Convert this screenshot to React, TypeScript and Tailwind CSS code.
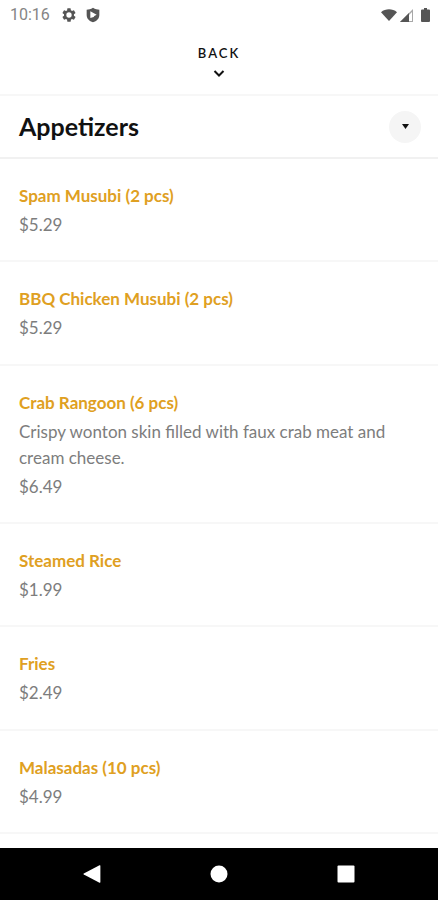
type MenuItem = { name: string; description?: string; price: string };

const items: MenuItem[] = [
  { name: "Spam Musubi (2 pcs)", price: "$5.29" },
  { name: "BBQ Chicken Musubi (2 pcs)", price: "$5.29" },
  {
    name: "Crab Rangoon (6 pcs)",
    description: "Crispy wonton skin filled with faux crab meat and cream cheese.",
    price: "$6.49",
  },
  { name: "Steamed Rice", price: "$1.99" },
  { name: "Fries", price: "$2.49" },
  { name: "Malasadas (10 pcs)", price: "$4.99" },
];

function StatusBar() {
  return (
    <div className="flex h-[30px] items-center justify-between pr-2 pl-[10px] text-[#555555]">
      <div className="flex items-center">
        <time className="w-[51px] font-['Roboto',sans-serif] text-base leading-5 text-[#858585]">10:16</time>
        <svg className="size-4" viewBox="0 0 24 24" fill="currentColor" aria-label="Settings" role="img">
          <path
            fillRule="evenodd"
            d="M19.4 13c.04-.3.06-.6.06-1s-.02-.7-.07-1l2.1-1.65a.5.5 0 0 0 .12-.64l-2-3.46a.5.5 0 0 0-.6-.22l-2.5 1a7.3 7.3 0 0 0-1.7-.98l-.37-2.65A.5.5 0 0 0 14 2h-4a.5.5 0 0 0-.5.42l-.37 2.65c-.6.24-1.17.57-1.69.98l-2.49-1a.5.5 0 0 0-.61.22l-2 3.46a.5.5 0 0 0 .12.64L4.57 11a8 8 0 0 0 0 2l-2.11 1.65a.5.5 0 0 0-.12.64l2 3.46c.12.22.38.3.6.22l2.5-1c.52.4 1.08.73 1.69.98l.37 2.65c.04.24.25.4.5.4h4c.25 0 .46-.16.5-.4l.37-2.65c.6-.25 1.17-.58 1.69-.98l2.49 1c.23.08.49 0 .61-.22l2-3.46a.5.5 0 0 0-.12-.64zM12 16a4 4 0 1 1 0-8 4 4 0 0 1 0 8z"
          />
        </svg>
        <svg className="ml-2 size-4" viewBox="0 0 24 24" aria-label="Play Protect" role="img">
          <path fill="currentColor" d="M12 1c3.500 2.300 6.500 2.800 9.500 3v8c0 5.500-4 9.300-9.500 11-5.500-1.700-9.500-5.500-9.500-11V4c3-.2 6-.7 9.500-3z" />
          <path fill="#ffffff" d="M8 6.500l9.500 5-3.500 2-1 1.500-5 1.500z" />
        </svg>
      </div>
      <div className="flex items-center">
        <svg className="h-3 w-4" viewBox="0 0 16 12" fill="currentColor" aria-label="Wi-Fi" role="img">
          <path d="M0 3.200C4.500-.6 11.500-.6 16 3.200L8 12z" />
        </svg>
        <svg className="ml-[3px] h-[13px] w-[13px]" viewBox="0 0 13 13" aria-label="Mobile signal" role="img">
          <path fill="#a8a8a8" d="M0 13L13 0v13z" />
          <path fill="#ffffff" d="M9 6l3-3v9H9z" />
          <path fill="currentColor" d="M0 13L9 4v9z" />
        </svg>
        <svg className="ml-2 h-[14px] w-[9px]" viewBox="0 0 9 14" fill="currentColor" aria-label="Battery" role="img">
          <path d="M3 0h3v1.500h2q1 0 1 1V13q0 1-1 1H1q-1 0-1-1V2.500q0-1 1-1h2z" />
        </svg>
      </div>
    </div>
  );
}

function NavBar() {
  return (
    <nav aria-label="System navigation" className="flex h-[52px] items-center justify-around bg-black px-7 text-white">
      <button type="button" aria-label="Back" className="p-2">
        <svg className="size-[18px]" viewBox="0 0 18 18" fill="currentColor">
          <path d="M16.500.3q.9-.4.9.6v16.200q0 1-.9.600L.8 9.600Q0 9 .8 8.400z" />
        </svg>
      </button>
      <button type="button" aria-label="Home" className="p-2">
        <svg className="size-[18px]" viewBox="0 0 18 18" fill="currentColor">
          <circle cx="9" cy="9" r="8.500" />
        </svg>
      </button>
      <button type="button" aria-label="Recent apps" className="p-2">
        <svg className="size-[18px]" viewBox="0 0 18 18" fill="currentColor">
          <rect x="0.500" y="0.500" width="17" height="17" rx="1" />
        </svg>
      </button>
    </nav>
  );
}

export default function App() {
  return (
    <div className="flex min-h-screen flex-col bg-white font-['Lato',sans-serif] text-[#111111]">
      <StatusBar />
      <header className="flex h-[66px] justify-center border-b-2 border-[#f7f7f7] pt-[13px]">
        <button type="button" className="flex flex-col items-center self-start text-[13px] leading-5 font-semibold tracking-[2px]">
          BACK
          <svg className="mt-[6px] h-[9px] w-3" viewBox="0 0 12 9" fill="none" stroke="currentColor" strokeWidth="2" aria-hidden="true">
            <path d="M1.500 2L6 6.500 10.500 2" />
          </svg>
        </button>
      </header>
      <main className="flex grow flex-col">
        <div className="flex h-[63px] items-center justify-between border-b-2 border-[#f1f1f1] pr-[17px] pl-[19px]">
          <h1 className="text-[25px] font-bold">Appetizers</h1>
          <button type="button" aria-label="Choose a category" className="flex size-8 items-center justify-center rounded-full bg-[#f5f5f5]">
            <svg className="h-[5px] w-[7px]" viewBox="0 0 7 5" fill="currentColor">
              <path d="M0 0h7L3.500 5z" />
            </svg>
          </button>
        </div>
        <ul className="flex grow flex-col pb-[14px]">
          {items.map((item) => (
            <li key={item.name} className="flex grow flex-col justify-center gap-[3px] border-b-2 border-[#f7f7f7] px-[19px] pt-[21px] pb-[19px] leading-[26px]">
              <h2 className="text-[17px] font-bold text-[#dfa022]">{item.name}</h2>
              {item.description && <p className="text-[17px] text-[#7d7d7d]">{item.description}</p>}
              <p className="text-[17px] text-[#7d7d7d]">{item.price}</p>
            </li>
          ))}
        </ul>
      </main>
      <NavBar />
    </div>
  );
}
